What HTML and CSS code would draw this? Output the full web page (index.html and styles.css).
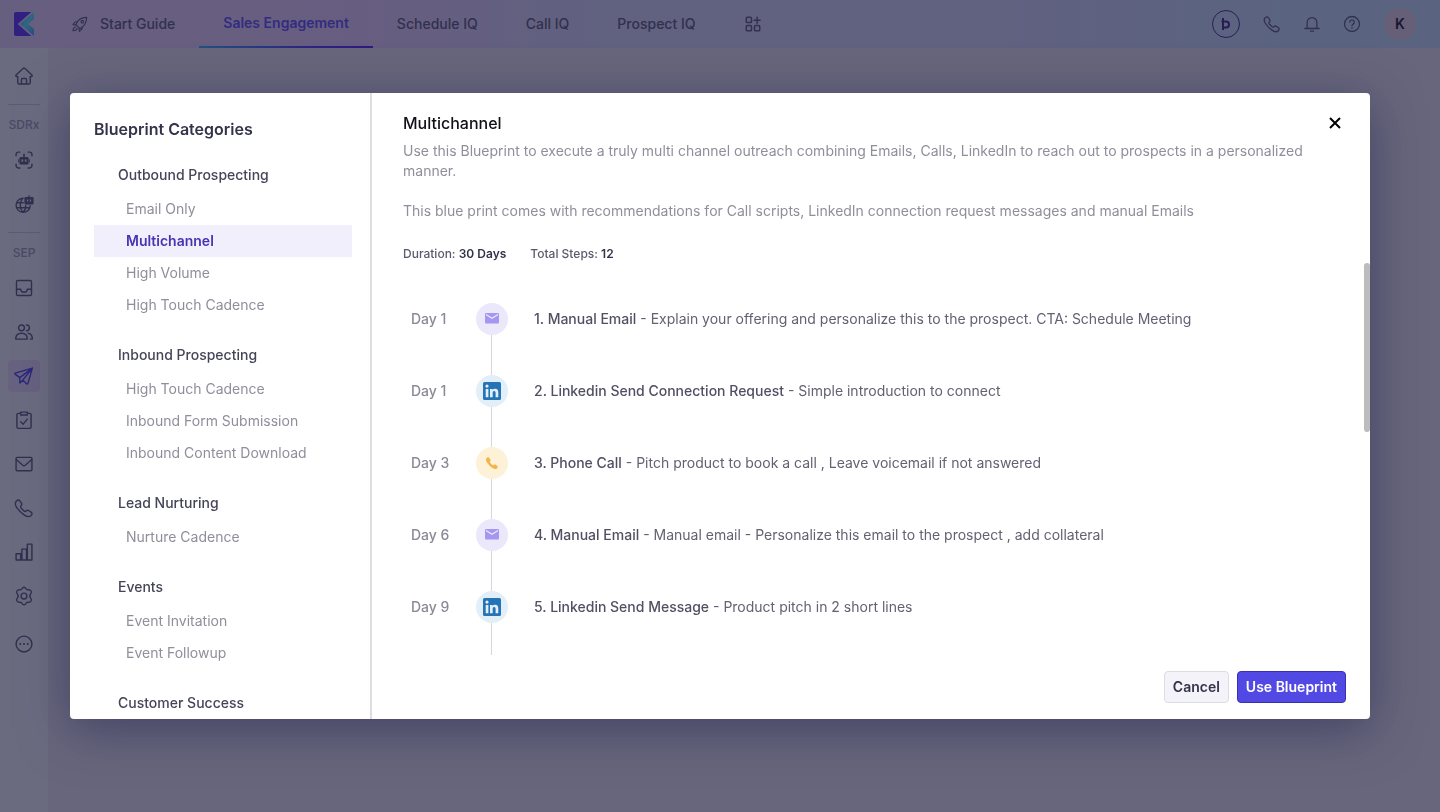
FILE: index.html
```html
<!DOCTYPE html>
<html lang="en">

<head>
  <meta charset="UTF-8">
  <meta name="viewport" content="width=device-width, initial-scale=1.0">
  <title>Blueprints</title>
  <link rel="stylesheet" href="styles.css">
</head>

<body>
  <header class="topbar">
    <a class="brand" href="#" aria-label="Home">
      <svg width="22" height="26" viewBox="0 0 22 26">
        <defs>
          <linearGradient id="brandArrow" x1="0" y1="0" x2="1" y2="1">
            <stop offset="0" stop-color="#5fa8ff" />
            <stop offset=".5" stop-color="#58f0ff" />
            <stop offset="1" stop-color="#4a9cff" />
          </linearGradient>
        </defs>
        <path d="M3 1h15.500L5 13l13.500 12H3a2 2 0 0 1-2-2V3a2 2 0 0 1 2-2z" fill="#5a28ff" />
        <path d="M18.500 1H21L7.500 13 21 25h-2.500L5 13z" fill="#e4e0ff" />
        <path d="M21 1v7l-6 5 6 5v7L7 13z" fill="url(#brandArrow)" />
      </svg>
    </a>
    <nav class="tabs">
      <a class="tab" href="#">
        <svg class="icon" width="16" height="16" viewBox="0 0 24 24">
          <path d="M9 16l-3-3C8 6 13 2 22 2c0 9-4 14-10 17z" />
          <circle cx="15.500" cy="8.500" r="2" />
          <path d="M8 9H4.500L1.500 13l4.500.5M15 16.500v3L11 23l-.5-4.500M5.500 16.500c-2.500 0-3.500 2-4 5.500 4 0 6-1.500 6-3.500" />
        </svg>
        Start Guide
      </a>
      <a class="tab active" href="#">Sales Engagement</a>
      <a class="tab" href="#">Schedule IQ</a>
      <a class="tab" href="#">Call IQ</a>
      <a class="tab" href="#">Prospect IQ</a>
      <a class="tab" href="#" aria-label="More apps">
        <svg class="icon bold" width="18" height="18" viewBox="0 0 24 24">
          <rect x="3" y="3" width="7" height="7" rx="1.500" />
          <rect x="3" y="14" width="7" height="7" rx="1.500" />
          <rect x="14" y="14" width="7" height="7" rx="1.500" />
          <path d="M17.500 3v8M13.500 7h8" />
        </svg>
      </a>
    </nav>
    <div class="tools">
      <button class="round" type="button" aria-label="Assistant">
        <svg width="12" height="14" viewBox="0 0 12 14" fill="none" stroke="currentColor" stroke-width="2">
          <path d="M3 1v12" />
          <path d="M1.500 4.500H6a3 3 0 0 1 0 6H3" />
        </svg>
      </button>
      <button class="tool" type="button" aria-label="Phone">
        <svg class="icon" width="18" height="18" viewBox="0 0 24 24"><path d="M3 3.500c1.500-1.500 3-1.500 4 0l2 3c.7 1.200.3 2-.7 3-.8.800-.6 1.500.2 2.500l3.500 3.500c1 .8 1.700 1 2.500.2 1-1 1.800-1.400 3-.7l3 2c1.500 1 1.500 2.500 0 4-2 2-5 1.500-8-.5-3.500-2.300-7-5.800-9.500-9.500-1.500-2.500-2-5.500 0-7.500z" /></svg>
      </button>
      <button class="tool" type="button" aria-label="Notifications">
        <svg class="icon" width="18" height="18" viewBox="0 0 24 24"><path d="M5.500 18v-8a6.500 6.500 0 0 1 13 0v8M2.500 18h19M10 21.500h4" /></svg>
      </button>
      <button class="tool" type="button" aria-label="Help">
        <svg class="icon" width="18" height="18" viewBox="0 0 24 24">
          <circle cx="12" cy="12" r="10" />
          <path d="M9 9.500a3 3 0 1 1 4.500 2.600c-1 .6-1.500 1-1.500 2.100M12 17v.6" />
        </svg>
      </button>
      <button class="avatar" type="button">K</button>
    </div>
  </header>

  <div class="shell">
    <nav class="sidebar">
      <a class="side-link" href="#" aria-label="Dashboard">
        <svg class="icon" width="20" height="20" viewBox="0 0 24 24"><path d="M4.500 12.500H3c-1 0-1.200-1-.5-1.700l8-7.600a2.200 2.200 0 0 1 3 0l8 7.600c.7.700.5 1.700-.5 1.700h-1.500V20a1.500 1.500 0 0 1-1.500 1.500H6A1.500 1.500 0 0 1 4.500 20zM9 21.500V16a1 1 0 0 1 1-1h4a1 1 0 0 1 1 1v5.500" /></svg>
      </a>
      <div class="rule"></div>
      <div class="side-label">SDRx</div>
      <a class="side-link" href="#" aria-label="Agents">
        <svg class="icon" width="20" height="20" viewBox="0 0 24 24">
          <path d="M2.500 7V5A2.500 2.500 0 0 1 5 2.500h2M17 2.500h2A2.500 2.500 0 0 1 21.500 5v2M21.500 17v2a2.500 2.500 0 0 1-2.500 2.500h-2M7 21.500H5A2.500 2.500 0 0 1 2.500 19v-2M12 6v3" />
          <path class="solid" fill-rule="evenodd" d="M8 8.500h8a1.500 1.500 0 0 1 1.500 1.500v6a1.500 1.500 0 0 1-1.500 1.500H8A1.500 1.500 0 0 1 6.500 16v-6A1.500 1.500 0 0 1 8 8.500zm1 3V14h2v-2.500zm4 0V14h2v-2.500zM5 11h1v4H5zM18 11h1v4h-1zM11 4.500h2v2h-2z" />
        </svg>
      </a>
      <a class="side-link" href="#" aria-label="Web visitors">
        <svg class="icon" width="20" height="20" viewBox="0 0 24 24">
          <path d="M11 5a8.500 8.500 0 1 0 8.500 9M3 10.500h8M3 16.500h16M10.500 5c-4 5-4 12 0 17M11 22c2.500-2.500 3.200-5 3-8" />
          <path class="solid" fill-rule="evenodd" d="M14 3.500h3.200V1.500h1.600v2H22A1.500 1.500 0 0 1 23.500 5v6a1.500 1.500 0 0 1-1.500 1.500h-8a1.500 1.500 0 0 1-1.500-1.500V5A1.500 1.500 0 0 1 14 3.500zm1.500 3V9H17V6.500zm3.500 0V9h1.500V6.500z" />
        </svg>
      </a>
      <div class="rule"></div>
      <div class="side-label">SEP</div>
      <a class="side-link" href="#" aria-label="Inbox">
        <svg class="icon" width="20" height="20" viewBox="0 0 24 24"><rect x="3" y="3" width="18" height="18" rx="1.500" /><path d="M3 13.500h5c0 2 1.500 3.500 4 3.500s4-1.500 4-3.500h5" /></svg>
      </a>
      <a class="side-link" href="#" aria-label="Prospects">
        <svg class="icon" width="20" height="20" viewBox="0 0 24 24"><circle cx="9" cy="7" r="3.500" /><path d="M2 20.500c0-4.500 3-7 7-7s7 2.500 7 7zM15 3.500a3.500 3.500 0 1 1 0 7M17 13.500c3 .5 5 3 5 7h-2.500" /></svg>
      </a>
      <a class="side-link active" href="#" aria-label="Cadences">
        <svg class="icon" width="20" height="20" viewBox="0 0 24 24"><path d="M22 2.500L1.500 8.500c-.6.300-.6.900-.2 1.300L7 14v6.500l3.500-3.500 5 4.500c.5.300 1 .2 1.200-.4zM22 2.500L7 14M22 2.500L10.500 17" /></svg>
      </a>
      <a class="side-link" href="#" aria-label="Tasks">
        <svg class="icon" width="20" height="20" viewBox="0 0 24 24"><path d="M8 4H5a1.500 1.500 0 0 0-1.500 1.500v15A1.500 1.500 0 0 0 5 22h14a1.500 1.500 0 0 0 1.500-1.500v-15A1.500 1.500 0 0 0 19 4h-3M8 2.500h8v3.500H8zM8 14l3 3 5-6" /></svg>
      </a>
      <a class="side-link" href="#" aria-label="Emails">
        <svg class="icon" width="20" height="20" viewBox="0 0 24 24"><rect x="2.500" y="4" width="19" height="16" rx="1" /><path d="M3 7l7.500 6.500a2.500 2.500 0 0 0 3 0L21 7" /></svg>
      </a>
      <a class="side-link" href="#" aria-label="Calls">
        <svg class="icon" width="20" height="20" viewBox="0 0 24 24"><path d="M3 3.500c1.500-1.500 3-1.500 4 0l2 3c.7 1.200.3 2-.7 3-.8.800-.6 1.500.2 2.500l3.500 3.500c1 .8 1.700 1 2.500.2 1-1 1.800-1.400 3-.7l3 2c1.500 1 1.500 2.500 0 4-2 2-5 1.500-8-.5-3.500-2.300-7-5.800-9.500-9.500-1.500-2.500-2-5.500 0-7.500z" /></svg>
      </a>
      <a class="side-link" href="#" aria-label="Reports">
        <svg class="icon" width="20" height="20" viewBox="0 0 24 24"><path d="M2.500 14H8v7.500H2.500zM9.500 8.500H15v13H9.500zM16 2.500h5.500v19H16z" /></svg>
      </a>
      <a class="side-link" href="#" aria-label="Settings">
        <svg class="icon" width="20" height="20" viewBox="0 0 24 24"><path d="M12 1.500c1 0 1.700.5 2.200 1.500.6 1.200 1.400 1.600 2.800 1.500 1.800-.2 2.800.3 3.500 1.500s.6 2.200-.5 3.500c-1.200 1.500-1.200 3.500 0 5 1.100 1.300 1.200 2.300.5 3.500s-1.700 1.700-3.500 1.500c-1.400-.1-2.200.3-2.800 1.500-.5 1-1.200 1.500-2.200 1.500s-1.700-.5-2.200-1.500c-.6-1.200-1.400-1.600-2.800-1.500-1.800.2-2.800-.3-3.500-1.500s-.6-2.200.5-3.500c1.200-1.500 1.200-3.500 0-5-1.100-1.300-1.200-2.300-.5-3.500s1.700-1.700 3.500-1.500c1.400.1 2.200-.3 2.800-1.500.5-1 1.200-1.500 2.200-1.500z" /><circle cx="12" cy="12" r="3.500" /></svg>
      </a>
      <a class="side-link last" href="#" aria-label="More">
        <svg class="icon" width="20" height="20" viewBox="0 0 24 24"><circle cx="12" cy="12" r="9.500" /><path class="dots" d="M7.500 12h.01M12 12h.01M16.500 12h.01" /></svg>
      </a>
    </nav>
    <main class="page"></main>
  </div>

  <!-- shared symbols for the step list -->
  <svg class="sprite">
    <symbol id="mail" viewBox="0 0 16 16">
      <path d="M2 2h12a1 1 0 0 1 1 1v8.500a1 1 0 0 1-1 1H2a1 1 0 0 1-1-1V3a1 1 0 0 1 1-1z" fill="#a596f0" />
      <path d="M2 3.500L8 7.300l6-3.800" fill="none" stroke="#ece8fc" stroke-width="1.300" />
    </symbol>
    <symbol id="linkedin" viewBox="0 0 18 18">
      <rect width="18" height="18" rx="1.500" fill="#2574b5" />
      <circle cx="4" cy="4.100" r="1.600" fill="#e2eff9" />
      <path d="M2.700 6.900h2.700v8.400H2.700zM7 6.900h2.500V8c.5-.8 1.400-1.300 2.600-1.300 2.500 0 3.200 1.600 3.200 4v4.600h-2.700v-4.200c0-1.100-.2-2.100-1.400-2.100s-1.500.9-1.500 2.100v4.200H7z" fill="#e2eff9" />
    </symbol>
    <symbol id="call" viewBox="0 0 16 16">
      <path d="M2.600 3c.8-.9 2-1 2.600-.2l1.200 2c.4.700.2 1.200-.3 1.700-.4.500-.3.900.2 1.400l1.800 1.800c.5.500.9.600 1.400.2.600-.5 1.100-.7 1.700-.3l2 1.200c.8.600.7 1.800-.2 2.600-1.400 1.200-3.600.5-6-1.400C4.700 10 2.800 7.600 2.200 6c-.5-1.200-.4-2.200.4-3z" fill="#f3b54a" />
    </symbol>
  </svg>

  <div class="overlay">
    <section class="modal" role="dialog" aria-modal="true" aria-labelledby="blueprintTitle">
      <aside class="categories">
        <h2>Blueprint Categories</h2>
        <div class="group">
          <h3>Outbound Prospecting</h3>
          <a href="#">Email Only</a>
          <a class="selected" href="#">Multichannel</a>
          <a href="#">High Volume</a>
          <a href="#">High Touch Cadence</a>
        </div>
        <div class="group">
          <h3>Inbound Prospecting</h3>
          <a href="#">High Touch Cadence</a>
          <a href="#">Inbound Form Submission</a>
          <a href="#">Inbound Content Download</a>
        </div>
        <div class="group">
          <h3>Lead Nurturing</h3>
          <a href="#">Nurture Cadence</a>
        </div>
        <div class="group">
          <h3>Events</h3>
          <a href="#">Event Invitation</a>
          <a href="#">Event Followup</a>
        </div>
        <div class="group">
          <h3>Customer Success</h3>
        </div>
      </aside>

      <div class="detail">
        <div class="intro">
          <div class="title-row">
            <h1 id="blueprintTitle">Multichannel</h1>
            <button class="close" type="button" aria-label="Close">
              <svg width="12" height="12" viewBox="0 0 12 12"><path d="M1 1l10 10M11 1L1 11" /></svg>
            </button>
          </div>
          <p>Use this Blueprint to execute a truly multi channel outreach combining Emails, Calls, LinkedIn to reach out to prospects in a personalized manner.</p>
          <p>This blue print comes with recommendations for Call scripts, LinkedIn connection request messages and manual Emails</p>
          <div class="meta">
            <span>Duration: <b>30 Days</b></span>
            <span>Total Steps: <b>12</b></span>
          </div>
        </div>

        <div class="scroll">
          <ol class="steps">
            <li class="step">
              <span class="day">Day 1</span>
              <span class="marker"><span class="badge mail"><svg width="16" height="16"><use href="#mail" /></svg></span></span>
              <span class="text"><b>1. Manual Email</b> - Explain your offering and personalize this to the prospect. CTA: Schedule Meeting</span>
            </li>
            <li class="step">
              <span class="day">Day 1</span>
              <span class="marker"><span class="badge linkedin"><svg width="18" height="18"><use href="#linkedin" /></svg></span></span>
              <span class="text"><b>2. Linkedin Send Connection Request</b> - Simple introduction to connect</span>
            </li>
            <li class="step">
              <span class="day">Day 3</span>
              <span class="marker"><span class="badge call"><svg width="16" height="16"><use href="#call" /></svg></span></span>
              <span class="text"><b>3. Phone Call</b> - Pitch product to book a call , Leave voicemail if not answered</span>
            </li>
            <li class="step">
              <span class="day">Day 6</span>
              <span class="marker"><span class="badge mail"><svg width="16" height="16"><use href="#mail" /></svg></span></span>
              <span class="text"><b>4. Manual Email</b> - Manual email - Personalize this email to the prospect , add collateral</span>
            </li>
            <li class="step">
              <span class="day">Day 9</span>
              <span class="marker"><span class="badge linkedin"><svg width="18" height="18"><use href="#linkedin" /></svg></span></span>
              <span class="text"><b>5. Linkedin Send Message</b> - Product pitch in 2 short lines</span>
            </li>
          </ol>
          <div class="thumb"></div>
        </div>

        <footer class="actions">
          <button class="btn" type="button">Cancel</button>
          <button class="btn primary" type="button">Use Blueprint</button>
        </footer>
      </div>
    </section>
  </div>
</body>

</html>
```
FILE: styles.css
```css
* {
  box-sizing: border-box;
}

html,
body {
  height: 100%;
  margin: 0;
}

body {
  display: flex;
  flex-direction: column;
  overflow: hidden;
  font-family: Inter, "Liberation Sans", sans-serif;
  font-size: 14px;
  line-height: 20px;
  color: #5a5670;
  background: #fff;
}

a {
  color: inherit;
  text-decoration: none;
}

button {
  font: inherit;
  color: inherit;
  padding: 0;
  border: none;
  background: none;
  cursor: pointer;
}

h1,
h2,
h3,
p,
ol {
  margin: 0;
  padding: 0;
}

b {
  font-weight: 600;
}

.icon {
  fill: none;
  stroke: currentColor;
  stroke-width: 1.7;
  stroke-linecap: round;
  stroke-linejoin: round;
}

.icon.bold {
  stroke-width: 2;
}

.icon .solid {
  fill: currentColor;
  stroke: none;
}

.icon .dots {
  stroke-width: 2.4;
}

.sprite {
  display: none;
}

/* top bar */

.topbar {
  height: 48px;
  flex: none;
  display: flex;
  align-items: center;
  background: linear-gradient(90deg, #f3dcff 0%, #f3d8ff 25%, #e1e1ff 42%, #e1e1ff 70%, #ceeaff 90%, #ceeaff 100%);
}

.brand {
  width: 48px;
  display: flex;
  justify-content: center;
}

.brand svg {
  display: block;
}

.tabs {
  display: flex;
  align-self: stretch;
  flex: 1;
}

.tab {
  display: flex;
  align-items: center;
  gap: 12px;
  padding: 0 24px;
  font-weight: 500;
}

.tab.active {
  font-weight: 600;
  color: #5c4cff;
  border-bottom: 2px solid;
  border-image: linear-gradient(90deg, #30b8ff, #4a3cff 60%, #5518ff) 1;
}

.tools {
  display: flex;
  align-items: center;
  padding-right: 24px;
}

.round {
  width: 28px;
  height: 28px;
  margin-right: 12px;
  display: flex;
  align-items: center;
  justify-content: center;
  border: 1px solid #3f207e;
  border-radius: 50%;
  color: #3f207e;
}

.tool {
  width: 40px;
  height: 40px;
  display: flex;
  align-items: center;
  justify-content: center;
}

.avatar {
  width: 32px;
  height: 32px;
  margin-left: 12px;
  border-radius: 50%;
  background: #f4dce6;
  color: #0c0c1c;
  font-weight: 600;
}

/* side bar */

.shell {
  flex: 1;
  display: flex;
}

.sidebar {
  width: 48px;
  padding: 12px 8px;
  display: flex;
  flex-direction: column;
  align-items: center;
  gap: 12px;
  background: #fff;
}

.side-link {
  width: 32px;
  height: 32px;
  display: flex;
  align-items: center;
  justify-content: center;
  border-radius: 4px;
}

.side-link.active {
  color: #4a3cf0;
  background: #f0e4fc;
}

.side-link.last {
  margin-top: 4px;
}

.rule {
  width: 100%;
  height: 1px;
  background: #d2d2da;
}

.side-label {
  font-size: 12px;
  line-height: 15px;
  font-weight: 500;
  color: #a2a2b2;
}

.page {
  flex: 1;
  background: #f3f0f3;
}

/* dialog */

.overlay {
  position: fixed;
  inset: 0;
  padding: 93px 70px;
  display: flex;
  background: rgba(28, 27, 60, .65);
}

.modal {
  flex: 1;
  display: flex;
  overflow: hidden;
  background: #fff;
  border-radius: 4px;
  box-shadow: 0 10px 50px rgba(44, 42, 84, .6);
}

.categories {
  width: 302px;
  flex: none;
  padding: 24px 18px 0 24px;
  overflow: hidden;
  border-right: 2px solid #dedee0;
}

.categories h2 {
  font-size: 16px;
  line-height: 24px;
  font-weight: 600;
  color: #33334a;
}

.group {
  margin-top: 24px;
}

.group h3 {
  padding-left: 24px;
  margin-bottom: 8px;
  font-size: 14px;
  line-height: 20px;
  font-weight: 500;
  color: #454558;
}

.group a {
  display: block;
  padding: 6px 32px;
  color: #8f8f9b;
}

.group a.selected {
  font-weight: 600;
  color: #4634b4;
  background: #f2effd;
}

.detail {
  flex: 1;
  min-width: 0;
  display: flex;
  flex-direction: column;
}

.intro {
  padding: 18px 24px 0 31px;
}

.title-row {
  display: flex;
  align-items: center;
  justify-content: space-between;
  margin-bottom: 6px;
}

.title-row h1 {
  font-size: 16px;
  line-height: 24px;
  font-weight: 500;
  color: #101018;
}

.close {
  width: 22px;
  height: 22px;
  display: flex;
  align-items: center;
  justify-content: center;
}

.close path {
  stroke: #000;
  stroke-width: 2;
}

.intro p {
  color: #8f8f9b;
}

.intro p + p {
  margin-top: 20px;
}

.meta {
  display: flex;
  gap: 24px;
  margin-top: 24px;
  font-size: 12px;
  line-height: 18px;
  font-weight: 500;
  color: #5a5a6c;
}

.meta b {
  color: #33334a;
}

.scroll {
  position: relative;
  flex: 1;
  min-height: 0;
  overflow: hidden;
}

.steps {
  list-style: none;
  padding: 40px 24px 16px 39px;
}

.step {
  display: flex;
  height: 72px;
  line-height: 32px;
}

.day {
  width: 65px;
  font-weight: 500;
  color: #8a8a96;
}

.marker {
  width: 32px;
  display: flex;
  flex-direction: column;
  align-items: center;
}

.marker::after {
  content: "";
  flex: 1;
  width: 1px;
  margin-right: 1px;
  background: #d6d6da;
}

.badge {
  width: 32px;
  height: 32px;
  display: flex;
  align-items: center;
  justify-content: center;
  border-radius: 50%;
}

.badge.mail {
  background: #ece8fc;
}

.badge.linkedin {
  background: #e2eff9;
}

.badge.call {
  background: #fdf1d8;
}

.text {
  padding-left: 26px;
  color: #626272;
}

.text b {
  font-weight: 500;
  color: #505062;
}

.thumb {
  position: absolute;
  top: 0;
  right: 0;
  width: 6px;
  height: 43%;
  border-radius: 3px;
  background: #bcbcbc;
}

.actions {
  display: flex;
  justify-content: flex-end;
  gap: 8px;
  padding: 16px 24px;
}

.btn {
  height: 32px;
  padding: 0 8px;
  border: 1px solid #dcdce4;
  border-radius: 4px;
  background: #f4f3fa;
  color: #33334a;
  font-weight: 600;
}

.btn.primary {
  border-color: #3a30b4;
  background: #5249e4;
  color: #fff;
}
```
